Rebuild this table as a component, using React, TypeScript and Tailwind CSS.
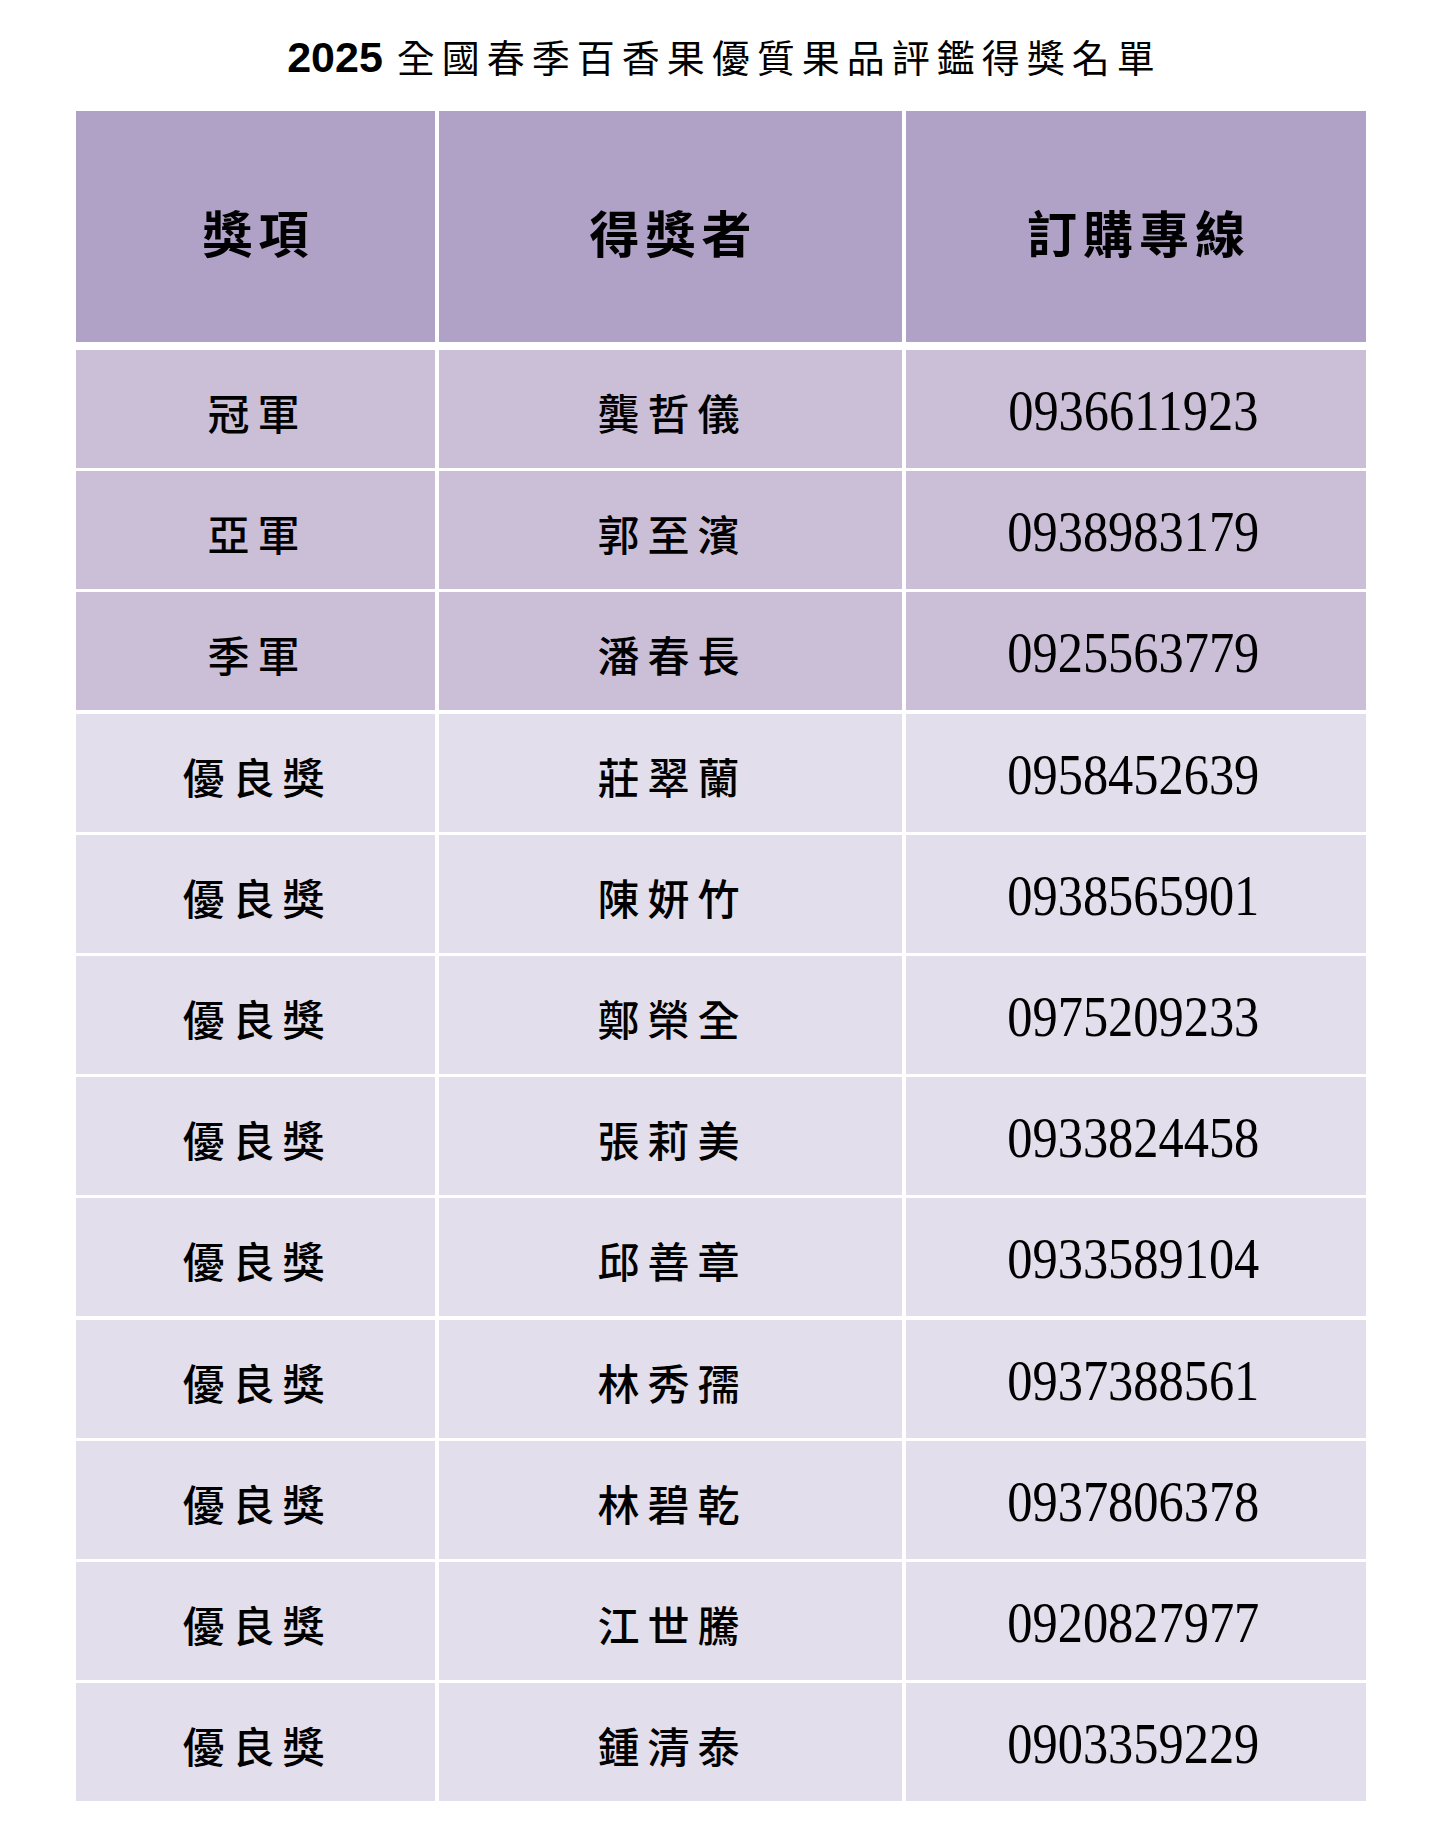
import React from "react";

const rows: [string, string, string][] = [
  ["冠軍", "龔哲儀", "0936611923"],
  ["亞軍", "郭至濱", "0938983179"],
  ["季軍", "潘春長", "0925563779"],
  ["優良獎", "莊翠蘭", "0958452639"],
  ["優良獎", "陳妍竹", "0938565901"],
  ["優良獎", "鄭榮全", "0975209233"],
  ["優良獎", "張莉美", "0933824458"],
  ["優良獎", "邱善章", "0933589104"],
  ["優良獎", "林秀孺", "0937388561"],
  ["優良獎", "林碧乾", "0937806378"],
  ["優良獎", "江世騰", "0920827977"],
  ["優良獎", "鍾清泰", "0903359229"],
];

const cjk = "font-['Noto_Sans_CJK_TC','Noto_Sans_CJK_JP',sans-serif]";

export default function App() {
  return (
    <div className="w-[1449px] min-h-[1845px] bg-white text-black">
      <div className="h-[111px] pt-[36px] flex justify-center items-baseline">
        <span className="font-['Liberation_Sans',Arial,sans-serif] font-bold text-[43px] leading-none mr-[14px]">
          2025
        </span>
        <span className={`${cjk} text-[38px] leading-none tracking-[7px]`}>
          全國春季百香果優質果品評鑑得獎名單
        </span>
      </div>

      <div className="ml-[76px] w-[1290px] grid grid-cols-[359px_463px_460px] gap-x-[4px]">
        {["獎項", "得獎者", "訂購專線"].map((h) => (
          <div
            key={h}
            className={`h-[231px] bg-[#b0a1c6] flex items-center justify-center pt-[8px] ${cjk} font-bold text-[50px] leading-none tracking-[6px]`}
          >
            <span className="pl-[6px]">{h}</span>
          </div>
        ))}
      </div>

      <div className="mt-[8px] ml-[76px] w-[1290px] grid grid-cols-[359px_463px_460px] gap-x-[4px] gap-y-[3.2px]">
        {rows.map(([a, b, c], i) => {
          const bg = i < 3 ? "bg-[#cbbfd8]" : "bg-[#e3deeb]";
          return (
            <React.Fragment key={i}>
              <div
                className={`h-[118px] ${bg} flex items-center justify-center pt-[6px] ${cjk} font-medium text-[42px] leading-none tracking-[8px]`}
              >
                <span className="pl-[4px]">{a}</span>
              </div>
              <div
                className={`h-[118px] ${bg} flex items-center justify-center pt-[6px] ${cjk} font-medium text-[42px] leading-none tracking-[8px]`}
              >
                <span className="pl-[4px]">{b}</span>
              </div>
              <div
                className={`h-[118px] ${bg} flex items-center justify-center pt-[4px] font-['Liberation_Serif','Times_New_Roman',serif] text-[56px] leading-none`}
              >
                <span className="inline-block scale-x-[0.9] pr-[6px]">{c}</span>
              </div>
            </React.Fragment>
          );
        })}
      </div>
    </div>
  );
}
